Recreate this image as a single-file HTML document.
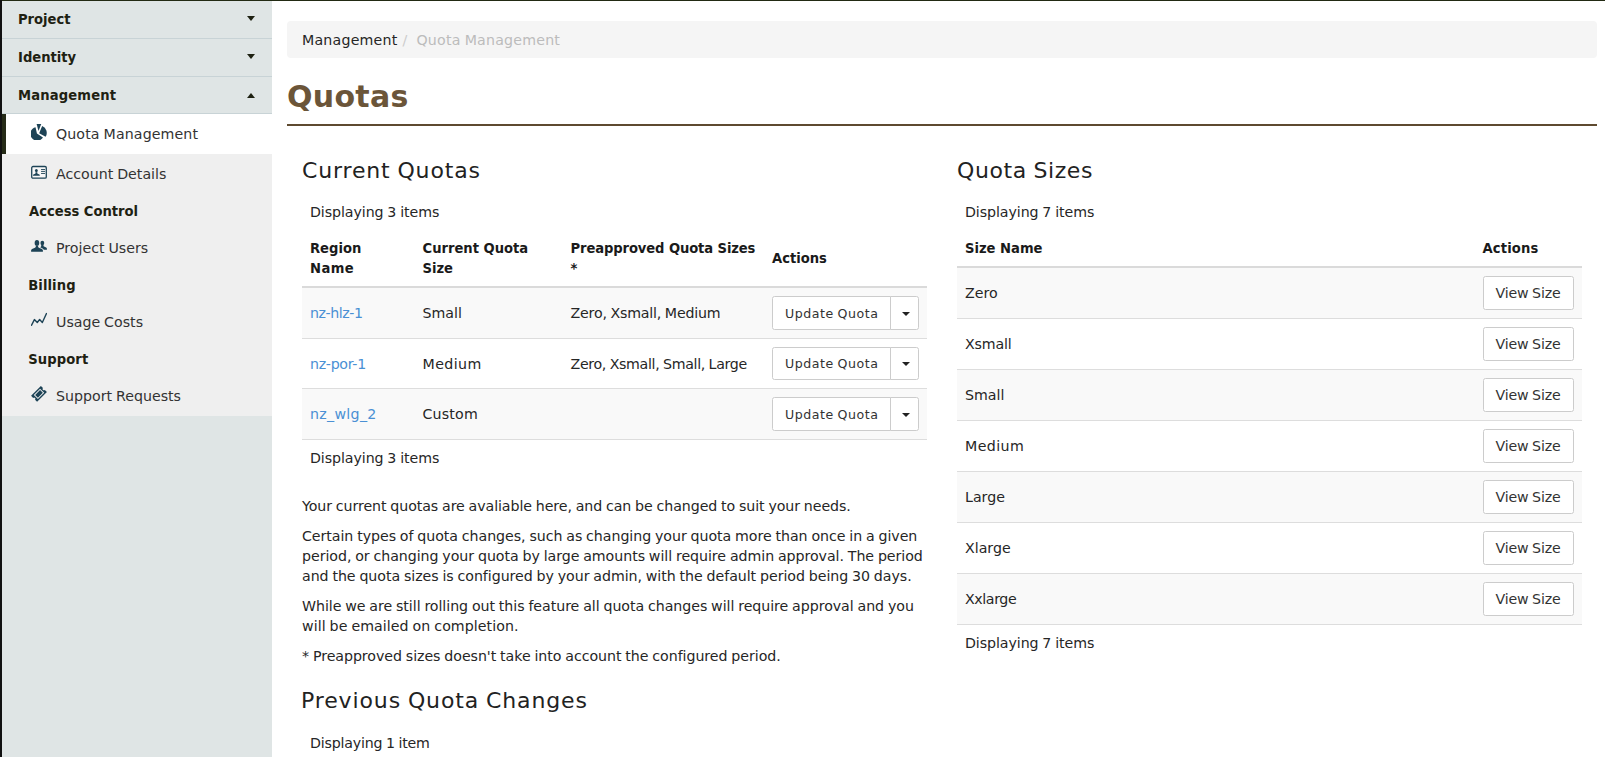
<!DOCTYPE html>
<html lang="en">
<head>
<meta charset="utf-8">
<title>Quotas</title>
<style>
*{box-sizing:border-box}
html,body{margin:0;padding:0}
body{width:1605px;height:757px;overflow:hidden;position:relative;background:#fff;color:#262626;
 font-family:"DejaVu Sans","Liberation Sans",sans-serif;font-size:14.2px;line-height:20px;word-spacing:-0.6px}
.b{font-family:"DejaVu Sans Condensed","Liberation Sans",sans-serif;font-weight:bold;font-size:14.6px;color:#1e2112;word-spacing:0}
a{color:#4a90d4;text-decoration:none}
#topline{position:absolute;left:0;top:0;width:1605px;height:1px;background:#222a13;z-index:5}
#leftline{position:absolute;left:0;top:0;width:2px;height:757px;background:#111;z-index:6}

/* ---------- sidebar ---------- */
#sidebar{position:absolute;left:2px;top:1px;width:270px;height:756px;background:#dfe5e5}
.sec{position:relative;height:38px;border-bottom:1px solid #c8d3d6;padding:0 0 0 16px;line-height:35px;white-space:nowrap}
.sec.last{height:37px;line-height:36px}
.caret{position:absolute;width:0;height:0;border-left:4.4px solid transparent;border-right:4.4px solid transparent}
.caret.dn{border-top:5px solid #1e2112}
.caret.up{border-bottom:5px solid #1e2112}
.sec .caret{right:16.6px;top:15px}
.sec.last .caret{top:16px}
#subnav{background:#efefef;height:302px}
.item{position:relative;height:40px;line-height:40px;padding-left:54px;color:#333;white-space:nowrap}
.item.active{background:#fff;border-left:4px solid #252b17;padding-left:50px;z-index:5}
.item svg{position:absolute;left:29px;top:10px;width:16px;height:16px;fill:#1d4356}
.item.active svg{left:25px}
.grp{height:34px;line-height:34px;padding-left:27px;white-space:nowrap}

/* ---------- main ---------- */
#main{position:absolute;left:287px;top:0;width:1310px}
#crumb{position:absolute;left:0;top:21px;width:1310px;height:37px;background:#f5f5f5;border-radius:4px;padding:0 15px;line-height:39px;white-space:nowrap;letter-spacing:.2px}
#crumb .sep{color:#ccc;padding:0 9px 0 5px}
#crumb .act{color:#bcbcbc}
h1{position:absolute;left:0;top:69px;margin:0;width:1310px;height:57px;border-bottom:2px solid #5e4a30;
 font-family:"DejaVu Sans","Liberation Sans",sans-serif;font-weight:bold;font-size:30px;line-height:55px;color:#6b5539;white-space:nowrap;word-spacing:0;letter-spacing:.3px}
h3{position:absolute;margin:0;font-weight:normal;font-size:22px;line-height:30px;color:#222;white-space:nowrap;word-spacing:-1px;letter-spacing:.6px}
.cap{position:absolute;white-space:nowrap;letter-spacing:-.07px;padding-left:8px;height:36px;line-height:36px}
table{position:absolute;border-collapse:separate;border-spacing:0;table-layout:fixed;width:625px}
th,td{padding:0 8px;text-align:left;vertical-align:middle;white-space:nowrap;overflow:visible}
th{font-family:"DejaVu Sans Condensed","Liberation Sans",sans-serif;font-weight:bold;font-size:14.6px;color:#1a1a1a;line-height:20px;border-bottom:2px solid #dadada;word-spacing:0}
td{border-top:1px solid #ddd}
tbody tr:first-child td{border-top:0}
tbody tr:nth-child(odd) td{background:#f9f9f9}
tbody tr:last-child td{border-bottom:1px solid #ddd}
.btn{display:inline-block;vertical-align:middle;height:34px;border:1px solid #ccc;background:#fff;border-radius:2.5px;color:#333;white-space:nowrap;text-align:center}
.bg{display:inline-block;vertical-align:middle;height:34px;white-space:nowrap;font-size:0}
.bg .btn.l{width:119px;border-radius:2.5px 0 0 2.5px;font-size:12.6px;line-height:33px;letter-spacing:.5px;text-indent:.5px}
.bg .btn.r{width:29px;border-radius:0 2.5px 2.5px 0;margin-left:-1px;position:relative}
.bg .btn.r .caret{left:10.5px;top:14.5px;border-left-width:4px;border-right-width:4px;border-top-width:4.5px;border-top-color:#222}
.bg.h33,.bg.h33 .btn{height:33px}
.bg.h33 .btn.l{line-height:32px}
.bg.h33 .btn.r .caret{top:14px}
.btn.v{width:91px;line-height:32px;letter-spacing:-0.2px}
p{position:absolute;margin:0;white-space:nowrap;left:15px;letter-spacing:-.05px}
</style>
</head>
<body>
<div id="topline"></div>
<div id="leftline"></div>

<nav id="sidebar">
  <div class="sec"><span class="b">Project</span><i class="caret dn"></i></div>
  <div class="sec"><span class="b">Identity</span><i class="caret dn"></i></div>
  <div class="sec last"><span class="b" style="letter-spacing:.15px">Management</span><i class="caret up"></i></div>
  <div id="subnav">
    <div class="item active"><svg viewBox="0 0 16 16"><path d="M5.94 9.47L4.51 3.13A6.85 6.85 0 1 0 11.96 13.44Z"/><path d="M7.52 7.1L5.62 .12A7 7 0 0 1 10.22 .12Z"/><path d="M8.16 9.32L11.17 2.02A7.5 7.5 0 0 1 14.66 12.8Z"/></svg><span style="letter-spacing:.1px">Quota Management</span></div>
    <div class="item"><svg viewBox="0 0 16 16"><rect x=".72" y="2.52" width="14.56" height="11.7" rx="1.3" fill="#f8f7f7" stroke="#1d4356" stroke-width="1.3"/><ellipse cx="5.37" cy="6.62" rx="1.4" ry="1.6"/><path d="M1.9 11.7C1.9 10.3 3.4 10.2 4.5 9.6L4.5 8.3H6.3L6.3 9.6C7.4 10.2 8.9 10.3 8.9 11.7Z"/><path d="M10.06 5.51H14.02M10.06 7.41H14.02M10.06 9.47H14.02" stroke="#1d4356" stroke-width=".9" fill="none"/></svg>Account Details</div>
    <div class="grp"><span class="b">Access Control</span></div>
    <div class="item"><svg viewBox="0 0 16 16"><ellipse cx="5.94" cy="5.04" rx="2.3" ry="3"/><path d="M.1 13.8V12.3C.1 11.2 2.5 10.6 4.4 9.6L5 8H6.9L7.5 9.6C9.4 10.6 11.9 11.2 11.9 12.3V13.8Z"/><ellipse cx="11.33" cy="4.88" rx="1.9" ry="2.25"/><path d="M10.3 6.8h2.1l.2 1.5C13.6 9 15.9 9.6 15.9 10.6V11.7H12.9C12.4 10.6 10.2 9.8 9.2 9.2L10.1 8.4Z"/></svg>Project Users</div>
    <div class="grp"><span class="b" style="margin-left:-.8px;letter-spacing:.1px">Billing</span></div>
    <div class="item"><svg viewBox="0 0 16 16"><path d="M.55 13.28L3.4 7.57L6.26 10.43L8.63 7.57L11.33 10.43L15.45 1.55" fill="none" stroke="#1d4356" stroke-width="1.4" stroke-linecap="round" stroke-linejoin="round"/></svg>Usage Costs</div>
    <div class="grp"><span class="b" style="margin-left:-.8px;letter-spacing:.1px">Support</span></div>
    <div class="item"><svg viewBox="0 0 16 16"><g transform="translate(8 7.9) rotate(-45)"><path fill-rule="evenodd" d="M-6.95 -4.25H6.95V-1.3A1.3 1.3 0 0 0 6.95 1.3V4.25H-6.95V1.3A1.3 1.3 0 0 0 -6.95 -1.3ZM-4.45 -2.9V2.9H4.45V-2.9ZM-3.45 -1.95H3.45V1.95H-3.45Z"/></g></svg>Support Requests</div>
  </div>
</nav>

<div id="main">
  <div id="crumb"><span>Management</span><span class="sep">/</span><span class="act">Quota Management</span></div>
  <h1>Quotas</h1>

  <!-- left column -->
  <h3 style="left:15px;top:156px;letter-spacing:.85px">Current Quotas</h3>
  <div class="cap" style="left:15px;top:194px">Displaying 3 items</div>
  <table style="left:15px;top:230px">
    <colgroup><col style="width:112.5px"><col style="width:148px"><col style="width:201.5px"><col style="width:163px"></colgroup>
    <thead><tr style="height:58px"><th>Region<br><span style="letter-spacing:.4px">Name</span></th><th>Current Quota<br>Size</th><th><span style="letter-spacing:-.1px">Preapproved Quota Sizes</span><br>*</th><th>Actions</th></tr></thead>
    <tbody>
      <tr style="height:50px"><td><a style="letter-spacing:-.45px">nz-hlz-1</a></td><td>Small</td><td style="letter-spacing:-.19px">Zero, Xsmall, Medium</td><td><span class="bg"><span class="btn l">Update Quota</span><span class="btn r"><i class="caret dn"></i></span></span></td></tr>
      <tr style="height:50px"><td><a style="letter-spacing:-.3px">nz-por-1</a></td><td style="letter-spacing:.4px">Medium</td><td style="letter-spacing:-.32px">Zero, Xsmall, Small, Large</td><td><span class="bg h33"><span class="btn l">Update Quota</span><span class="btn r"><i class="caret dn"></i></span></span></td></tr>
      <tr style="height:52px"><td><a style="letter-spacing:.3px">nz_wlg_2</a></td><td style="letter-spacing:.17px">Custom</td><td></td><td><span class="bg"><span class="btn l">Update Quota</span><span class="btn r"><i class="caret dn"></i></span></span></td></tr>
    </tbody>
  </table>
  <div class="cap" style="left:15px;top:440px">Displaying 3 items</div>

  <p style="top:496px;letter-spacing:-.075px">Your current quotas are avaliable here, and can be changed to suit your needs.</p>
  <p style="top:526px">Certain types of quota changes, such as changing your quota more than once in a given<br>period, or changing your quota by large amounts will require admin approval. The period<br>and the quota sizes is configured by your admin, with the default period being 30 days.</p>
  <p style="top:596px">While we are still rolling out this feature all quota changes will require approval and you<br><span style="letter-spacing:.05px">will be emailed on completion.</span></p>
  <p style="top:646px">* Preapproved sizes doesn't take into account the configured period.</p>

  <h3 style="left:14px;top:686px;letter-spacing:.88px">Previous Quota Changes</h3>
  <div class="cap" style="left:15px;top:725px;letter-spacing:-.2px">Displaying 1 item</div>

  <!-- right column -->
  <h3 style="left:670px;top:156px">Quota Sizes</h3>
  <div class="cap" style="left:670px;top:194px">Displaying 7 items</div>
  <table style="left:670px;top:230px">
    <colgroup><col style="width:517.5px"><col style="width:107.5px"></colgroup>
    <thead><tr style="height:38px"><th>Size Name</th><th><span style="letter-spacing:.15px">Actions</span></th></tr></thead>
    <tbody>
      <tr style="height:50px"><td>Zero</td><td><span class="btn v">View Size</span></td></tr>
      <tr style="height:51px"><td style="letter-spacing:-.15px">Xsmall</td><td><span class="btn v">View Size</span></td></tr>
      <tr style="height:51px"><td>Small</td><td><span class="btn v">View Size</span></td></tr>
      <tr style="height:51px"><td style="letter-spacing:.4px">Medium</td><td><span class="btn v">View Size</span></td></tr>
      <tr style="height:51px"><td>Large</td><td><span class="btn v">View Size</span></td></tr>
      <tr style="height:51px"><td>Xlarge</td><td><span class="btn v">View Size</span></td></tr>
      <tr style="height:52px"><td style="letter-spacing:-.4px">Xxlarge</td><td><span class="btn v">View Size</span></td></tr>
    </tbody>
  </table>
  <div class="cap" style="left:670px;top:625px">Displaying 7 items</div>
</div>
</body>
</html>
